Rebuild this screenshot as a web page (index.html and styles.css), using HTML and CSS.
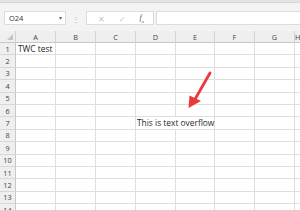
FILE: index.html
```html
<!DOCTYPE html>
<html lang="en">
<head>
  <meta charset="UTF-8" />
  <title>Text overflow</title>
  <link rel="stylesheet" href="styles.css">
</head>
<body>
  <div class="sheet">
    <div class="ribbon-edge"></div>

    <div class="formula-bar">
      <div class="name-box">
        <span>O24</span>
        <span class="caret">&#9662;</span>
      </div>
      <div class="grip">&#8942;</div>
      <div class="fx-buttons">
        <span class="fx-btn">&#10005;</span>
        <span class="fx-btn">&#10003;</span>
        <span class="fx-btn fx">f<sub>x</sub></span>
      </div>
      <div class="formula-input"></div>
    </div>

    <div class="grid" id="grid"></div>

    <svg class="arrow" width="40" height="50" viewBox="0 0 40 50">
      <line x1="30" y1="3" x2="14" y2="31" stroke="#e8393e" stroke-width="2.8" stroke-linecap="round"/>
      <polygon points="8.5,38 9.5,25.5 21,31" fill="#e8393e"/>
    </svg>
  </div>

  <script>
    const grid = document.getElementById('grid');
    const cols = ['A', 'B', 'C', 'D', 'E', 'F', 'G', 'H'];

    function cell(cls, text) {
      const el = document.createElement('div');
      el.className = cls;
      if (text) el.textContent = text;
      grid.appendChild(el);
      return el;
    }

    cell('corner');
    cols.forEach(c => cell('col-head', c));

    for (let r = 1; r <= 14; r++) {
      cell('row-head', String(r));
      for (let i = 0; i < cols.length; i++) {
        if (r === 1 && i === 0) {
          cell('cell', 'TWC test');
        } else if (r === 7 && i === 3) {
          const el = cell('cell overflow', 'This is text overflow');
          el.style.gridColumn = 'span 2';
          i++;
        } else {
          cell('cell');
        }
      }
    }
  </script>
</body>
</html>
```

FILE: styles.css
```css
* {
  box-sizing: border-box;
}
body {
  margin: 0;
  width: 300px;
  height: 210px;
  overflow: hidden;
  font-family: 'Open Sans', 'Liberation Sans', sans-serif;
  background: #f3f3f3;
}
.sheet {
  position: relative;
  width: 300px;
  height: 210px;
}
.ribbon-edge {
  height: 3px;
  background: #e4e4e4;
  border-bottom: 1px solid #d6d6d6;
}
.formula-bar {
  display: flex;
  align-items: center;
  height: 28px;
  padding: 8px 0 6px 4px;
  background: #f3f3f3;
}
.name-box {
  display: flex;
  align-items: center;
  justify-content: space-between;
  width: 62px;
  height: 14px;
  padding: 0 3px 0 4px;
  background: #fff;
  border: 1px solid #dcdcdc;
  font-size: 7.5px;
  color: #333;
}
.name-box .caret {
  font-size: 6px;
  color: #666;
}
.grip {
  width: 20px;
  text-align: center;
  font-size: 8px;
  color: #b4b4b4;
}
.fx-buttons {
  display: flex;
  align-items: center;
  justify-content: space-around;
  width: 68px;
  height: 14px;
  padding: 0 2px 0 4px;
  background: #fff;
  border: 1px solid #dcdcdc;
}
.fx-btn {
  font-size: 8px;
  color: #c4c4c4;
}
.fx-btn.fx {
  font-family: 'Liberation Serif', serif;
  font-style: italic;
  color: #555;
  font-size: 8px;
}
.fx-btn.fx sub {
  font-size: 5px;
}
.formula-input {
  flex: 1;
  height: 14px;
  margin-left: 2px;
  background: #fff;
  border: 1px solid #dcdcdc;
  border-right: none;
}
.grid {
  display: grid;
  grid-template-columns: 16px 40px 40px 40px 40px 39px 40px 40px 1fr;
  grid-template-rows: 12px;
  grid-auto-rows: 12.4px;
  background: #fff;
  font-size: 8.4px;
}
.corner,
.col-head,
.row-head {
  background: #efefef;
  color: #444;
  font-size: 7.3px;
  display: flex;
  align-items: center;
  justify-content: center;
}
.corner {
  position: relative;
  border-right: 1px solid #d0d0d0;
  border-bottom: 1px solid #c8c8c8;
}
.corner::after {
  content: '';
  position: absolute;
  right: 2px;
  bottom: 2px;
  border-left: 6px solid transparent;
  border-bottom: 6px solid #c2c2c2;
}
.col-head {
  border-right: 1px solid #d4d4d4;
  border-bottom: 1px solid #c8c8c8;
}
.row-head {
  border-right: 1px solid #c8c8c8;
  border-bottom: 1px solid #d8d8d8;
}
.cell {
  border-right: 1px solid #dedede;
  border-bottom: 1px solid #dedede;
  padding: 0 2px;
  color: #1e1e1e;
  white-space: nowrap;
  line-height: 11px;
}
.cell.overflow {
  padding-left: 1px;
  color: #2a2a2a;
}
.arrow {
  position: absolute;
  left: 180px;
  top: 70px;
}
```
